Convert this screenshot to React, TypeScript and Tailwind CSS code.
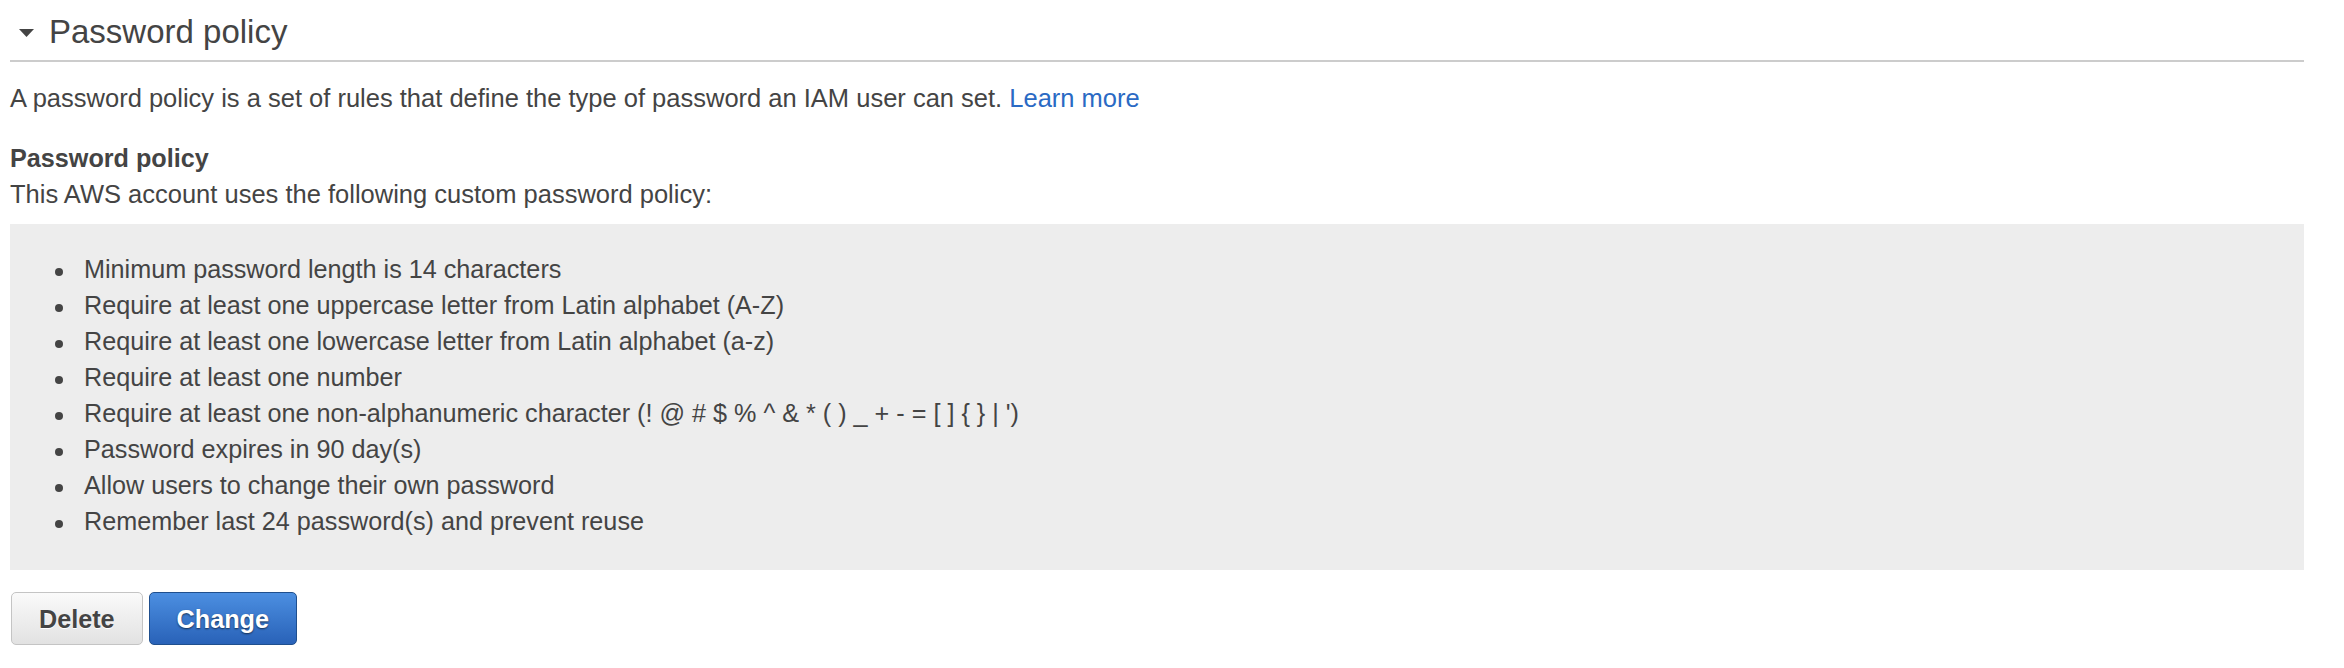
const rules = [
  "Minimum password length is 14 characters",
  "Require at least one uppercase letter from Latin alphabet (A-Z)",
  "Require at least one lowercase letter from Latin alphabet (a-z)",
  "Require at least one number",
  "Require at least one non-alphanumeric character (! @ # $ % ^ & * ( ) _ + - = [ ] { } | ')",
  "Password expires in 90 day(s)",
  "Allow users to change their own password",
  "Remember last 24 password(s) and prevent reuse",
];

function Caret() {
  return (
    <svg width="15" height="8" viewBox="0 0 15 8" className="shrink-0">
      <path d="M0 0 L15 0 L7.5 8 Z" fill="#444" />
    </svg>
  );
}

export default function App() {
  return (
    <div className="w-[2344px] h-[668px] bg-white text-[#444] font-['Liberation_Sans',Arial,sans-serif] text-[25.2px] leading-[36px]">
      <div className="ml-[10px] w-[2294px]">
        {/* Section header */}
        <div className="flex items-center pt-[14px] pb-[10px] border-b-2 border-[#ccc]">
          <div className="ml-[9px] mr-[15px] mt-[2px] flex items-center">
            <Caret />
          </div>
          <h2 className="text-[33px] leading-[36px] font-normal text-[#444]">Password policy</h2>
        </div>

        <p className="mt-[18px] text-[25.5px]">
          A password policy is a set of rules that define the type of password an IAM user can set.{" "}
          <a href="#" className="text-[#2a6ac4]">Learn more</a>
        </p>

        <div className="mt-[24px]">
          <div className="font-bold">Password policy</div>
          <div className="text-[25.5px]">This AWS account uses the following custom password policy:</div>
        </div>

        <div className="mt-[12px] bg-[#ededed] pt-[27px] pb-[31px]">
          <ul className="pl-[45px]">
            {rules.map((r) => (
              <li key={r} className="flex items-start">
                <span className="mt-[17px] w-[8px] h-[8px] rounded-full bg-[#444] shrink-0" />
                <span className="ml-[21px]">{r}</span>
              </li>
            ))}
          </ul>
        </div>

        <div className="mt-[22px] flex gap-[6px] pl-[1px]">
          <button className="h-[53px] px-[27px] rounded-[5px] border border-[#c4c4c4] bg-gradient-to-b from-[#fafafa] to-[#e2e2e2] font-bold text-[#444] [text-shadow:0_1px_0_#fff]">
            Delete
          </button>
          <button className="h-[53px] px-[27px] rounded-[5px] border border-[#1f4f8e] bg-gradient-to-b from-[#4c8fe1] to-[#2962b8] font-bold text-white [text-shadow:0_1px_2px_rgba(0,0,0,0.6)]">
            Change
          </button>
        </div>
      </div>
    </div>
  );
}
